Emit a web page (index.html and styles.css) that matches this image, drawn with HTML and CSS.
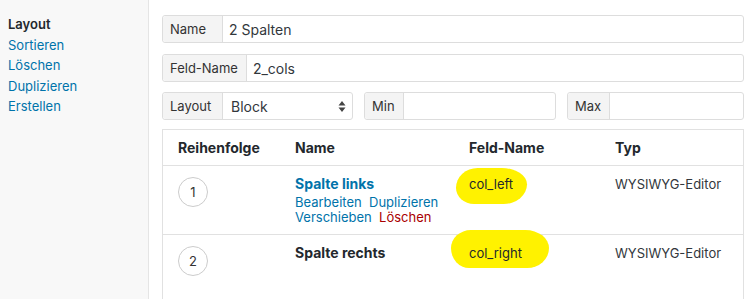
FILE: index.html
```html
<!DOCTYPE html>
<html lang="de">
<head>
    <meta charset="UTF-8">
    <title>Layout bearbeiten</title>
    <link rel="stylesheet" href="styles.css">
</head>
<body>
    <div class="page">
        <div class="sidebar">
            <div class="side-title">Layout</div>
            <a href="#">Sortieren</a>
            <a href="#">Löschen</a>
            <a href="#">Duplizieren</a>
            <a href="#">Erstellen</a>
        </div>

        <div class="main">
            <div class="field">
                <span class="field-label wide">Name</span>
                <span class="field-value">2 Spalten</span>
            </div>
            <div class="field">
                <span class="field-label wide">Feld-Name</span>
                <span class="field-value">2_cols</span>
            </div>

            <div class="field-row">
                <div class="field">
                    <span class="field-label wide">Layout</span>
                    <span class="field-value select">
                        Block
                        <svg width="8" height="13" viewBox="0 0 8 13"><path d="M4 1 L7.5 5.5 H0.5 Z M4 12 L7.5 7.5 H0.5 Z" fill="#444"/></svg>
                    </span>
                </div>
                <div class="field">
                    <span class="field-label">Min</span>
                    <span class="field-value"></span>
                </div>
                <div class="field">
                    <span class="field-label">Max</span>
                    <span class="field-value"></span>
                </div>
            </div>

            <div class="table">
                <div class="row head">
                    <div>Reihenfolge</div>
                    <div>Name</div>
                    <div>Feld-Name</div>
                    <div>Typ</div>
                </div>
                <div class="row">
                    <div><span class="order">1</span></div>
                    <div>
                        <a href="#" class="sub-name link">Spalte links</a>
                        <div class="actions">
                            <a href="#">Bearbeiten</a>&nbsp; <a href="#">Duplizieren</a><br>
                            <a href="#">Verschieben</a>&nbsp; <a href="#" class="delete">Löschen</a>
                        </div>
                    </div>
                    <div><span class="hl hl-left">col_left</span></div>
                    <div>WYSIWYG-Editor</div>
                </div>
                <div class="row">
                    <div><span class="order">2</span></div>
                    <div><span class="sub-name">Spalte rechts</span></div>
                    <div><span class="hl hl-right">col_right</span></div>
                    <div>WYSIWYG-Editor</div>
                </div>
            </div>
        </div>
    </div>
</body>
</html>
```

FILE: styles.css
```css
body {
    margin: 0;
    font-family: 'Inter', 'Liberation Sans', sans-serif;
    font-size: 13px;
    color: #32373c;
    background-color: #fff;
}
a {
    color: #0073aa;
    text-decoration: none;
}
.page {
    display: flex;
    min-height: 299px;
}
.sidebar {
    width: 140px;
    padding: 14px 0 0 8px;
    background-color: #f8f8f8;
    border-right: 1px solid #e5e5e5;
    display: flex;
    flex-direction: column;
    line-height: 20.5px;
}
.side-title {
    font-weight: 600;
    color: #23282d;
}
.main {
    flex: 1;
    padding: 15px 6px 0 13px;
    display: flex;
    flex-direction: column;
}
.field {
    display: flex;
    height: 26px;
    border: 1px solid #dddddd;
    border-radius: 3px;
    margin-bottom: 11px;
    background-color: #fff;
}
.field-label {
    display: flex;
    align-items: center;
    padding: 0 8px 0 7px;
    background-color: #f4f4f4;
    border-right: 1px solid #dddddd;
    border-radius: 3px 0 0 3px;
    color: #333;
}
.field-label.wide {
    min-width: 44px;
}
.field-value {
    flex: 1;
    display: flex;
    align-items: center;
    padding-left: 6px;
    font-size: 14px;
    color: #32373c;
}
.select {
    justify-content: space-between;
    padding: 0 6px 0 8px;
}
.field-row {
    display: grid;
    grid-template-columns: 191px 192px 1fr;
    gap: 11px;
    margin-top: -1px;
}
.field-row .field {
    margin-bottom: 0;
}
.table {
    flex: 1;
    margin-top: 9px;
    border: 1px solid #e1e1e1;
    border-bottom: none;
}
.row {
    display: grid;
    grid-template-columns: 117px 174px 146px 1fr;
    padding-left: 15px;
    border-bottom: 1px solid #e1e1e1;
    height: 69px;
    box-sizing: border-box;
    padding-top: 8px;
}
.row:last-child {
    border-bottom: none;
}
.row.head {
    height: 36px;
    padding-top: 0;
    align-items: center;
    font-size: 14px;
    font-weight: 700;
    color: #23282d;
}
.row > div {
    line-height: 20px;
}
.order {
    display: flex;
    align-items: center;
    justify-content: center;
    width: 28px;
    height: 28px;
    margin-top: 3px;
    border: 1px solid #cccccc;
    border-radius: 50%;
    color: #333;
}
.sub-name {
    font-size: 14px;
    font-weight: 700;
    color: #23282d;
}
.sub-name.link {
    color: #0073aa;
}
.actions {
    font-size: 13px;
    line-height: 15px;
    margin-top: 1px;
}
.actions .delete {
    color: #a00;
}
.hl {
    position: relative;
    z-index: 0;
    color: #23282d;
}
.hl::before {
    content: '';
    position: absolute;
    z-index: -1;
    background-color: #fff200;
}
.hl-left::before {
    top: -8px;
    bottom: -12px;
    left: -13px;
    right: -14px;
    border-radius: 24px 28px 26px 20px / 22px 18px 22px 18px;
}
.hl-right::before {
    top: -15px;
    bottom: -7px;
    left: -18px;
    right: -27px;
    border-radius: 22px 26px 24px 20px / 20px 20px 22px 22px;
}
```
